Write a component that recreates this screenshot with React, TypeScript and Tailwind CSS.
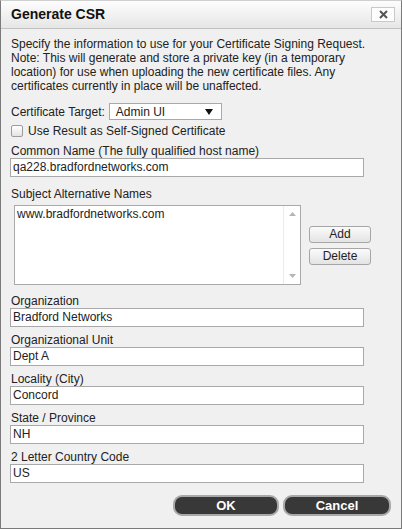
import React from 'react';

const fields = [
  { label: 'Organization', value: 'Bradford Networks' },
  { label: 'Organizational Unit', value: 'Dept A' },
  { label: 'Locality (City)', value: 'Concord' },
  { label: 'State / Province', value: 'NH' },
  { label: '2 Letter Country Code', value: 'US' },
];

function TextField({ label, value, first }: { label: string; value: string; first?: boolean }) {
  return (
    <div className={first ? '' : 'mt-[6px]'}>
      <div className="h-[14px] leading-[14px]">{label}</div>
      <div className="h-[19px] w-[354px] border border-[#a9a9a9] bg-white pl-[2px] leading-[17px] -ml-[1px]">
        {value}
      </div>
    </div>
  );
}

function GrayButton({ children }: { children: React.ReactNode }) {
  return (
    <div className="h-[17px] w-[62px] rounded-[3px] border border-[#a6a6a6] bg-gradient-to-b from-[#fbfbfb] to-[#e3e3e3] text-center leading-[15px] text-[12px]">
      {children}
    </div>
  );
}

function DarkButton({ children, width }: { children: React.ReactNode; width: string }) {
  return (
    <div
      className={`${width} h-[21px] rounded-[9px] border-2 border-[#a8a8a8] bg-[#383838] text-center text-[13px] font-bold leading-[17px] text-white`}
    >
      {children}
    </div>
  );
}

export default function App() {
  return (
    <div className="flex h-[529px] w-[402px] flex-col border border-[#7a7a7a] border-t-[#cfcfcf] bg-[#f0f0f0] font-['Liberation_Sans',Arial,sans-serif] text-[12px] text-[#222]">
      {/* Title bar */}
      <div className="flex h-[28px] shrink-0 items-center justify-between border-b border-[#c2c2c2] bg-gradient-to-b from-[#fdfdfd] to-[#e6e6e6] pl-[10px] pr-[6px]">
        <div className="text-[14px] font-bold text-[#111]">Generate CSR</div>
        <div className="mb-[1px] flex h-[15px] w-[24px] items-center justify-center border border-[#c9c9c9] bg-[#fdfdfd]">
          <svg width="9" height="9" viewBox="0 0 9 9">
            <path d="M1 1 L8 8 M8 1 L1 8" stroke="#555" strokeWidth="2" />
          </svg>
        </div>
      </div>

      <div className="flex flex-col px-[10px] pt-[8px]">
        <p className="leading-[14px]">
          Specify the information to use for your Certificate Signing Request.
          <br />
          Note: This will generate and store a private key (in a temporary location) for use when uploading the new certificate files. Any certificates currently in place will be unaffected.
        </p>

        {/* Certificate target */}
        <div className="mt-[10px] flex h-[17px] items-center">
          <span>Certificate Target:</span>
          <div className="ml-[4px] flex h-[17px] w-[113px] items-center justify-between border border-[#a9a9a9] bg-white pl-[6px] pr-[8px]">
            <span>Admin UI</span>
            <svg width="8" height="6" viewBox="0 0 8 6">
              <path d="M0 0 H8 L4 6 Z" fill="#111" />
            </svg>
          </div>
        </div>

        {/* Checkbox */}
        <div className="mt-[4px] flex h-[14px] items-center">
          <div className="h-[12px] w-[12px] rounded-[2px] border border-[#9c9c9c] bg-gradient-to-b from-[#ffffff] to-[#e4e4e4]" />
          <span className="ml-[5px]">Use Result as Self-Signed Certificate</span>
        </div>

        <div className="mt-[6px]">
          <TextField first label="Common Name (The fully qualified host name)" value="qa228.bradfordnetworks.com" />
        </div>

        {/* Subject Alternative Names */}
        <div className="mt-[10px] h-[14px] leading-[14px]">Subject Alternative Names</div>
        <div className="mt-[4px] flex">
          <div className="ml-[3px] flex h-[80px] w-[287px] border border-[#a9a9a9] bg-white">
            <div className="flex-1 pl-[2px] pt-[1px] leading-[14px]">www.bradfordnetworks.com</div>
            <div className="flex w-[17px] flex-col items-center justify-between border-l border-[#ececec] bg-white py-[6px]">
              <svg width="7" height="4" viewBox="0 0 7 4">
                <path d="M0 4 L3.5 0 L7 4 Z" fill="#b5b5b5" />
              </svg>
              <svg width="7" height="4" viewBox="0 0 7 4">
                <path d="M0 0 L7 0 L3.5 4 Z" fill="#b5b5b5" />
              </svg>
            </div>
          </div>
          <div className="ml-[8px] mt-[21px] flex flex-col gap-[5px]">
            <GrayButton>Add</GrayButton>
            <GrayButton>Delete</GrayButton>
          </div>
        </div>

        <div className="mt-[9px]">
          {fields.map((f, i) => (
            <TextField key={f.label} first={i === 0} label={f.label} value={f.value} />
          ))}
        </div>

        {/* Footer buttons */}
        <div className="mt-[12px] flex justify-end gap-[4px]">
          <DarkButton width="w-[106px]">OK</DarkButton>
          <DarkButton width="w-[108px]">Cancel</DarkButton>
        </div>
      </div>
    </div>
  );
}
